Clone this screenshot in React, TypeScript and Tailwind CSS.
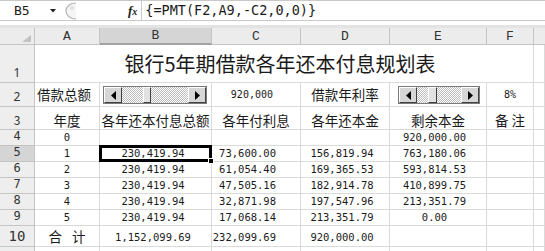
import React from 'react'

const grid = 'grid grid-cols-[35px_65px_112px_89px_89px_97px_47px_11px]'
const cell = 'flex min-w-0 border-r border-b border-[#dadada]'
const rowHead = 'flex items-end justify-center border-r border-b border-[#c4c4c4] pb-[3px] leading-none text-[12px] font-[\'Liberation_Sans\',sans-serif] text-[#333]'
const cjk = "font-['Noto_Sans_CJK_SC',sans-serif]"
const mono = "font-['DejaVu_Sans_Mono',monospace]"

const years = [
  { n: '4', a: '0', b: '', c: '', d: '', e: '920,000.00' },
  { n: '5', a: '1', b: '230,419.94', c: '73,600.00', d: '156,819.94', e: '763,180.06' },
  { n: '6', a: '2', b: '230,419.94', c: '61,054.40', d: '169,365.53', e: '593,814.53' },
  { n: '7', a: '3', b: '230,419.94', c: '47,505.16', d: '182,914.78', e: '410,899.75' },
  { n: '8', a: '4', b: '230,419.94', c: '32,871.98', d: '197,547.96', e: '213,351.79' },
  { n: '9', a: '5', b: '230,419.94', c: '17,068.14', d: '213,351.79', e: '0.00' }
]

function Arrow({ dir }: { dir: 'left' | 'right' }) {
  return (
    <div className="flex w-[18px] items-center justify-center border border-t-white border-l-white border-r-[#404040] border-b-[#404040] bg-[#d6d6d6]">
      <svg width="5" height="9" viewBox="0 0 5 9">
        {dir === 'left' ? <polygon points="5,0 5,9 0,4.5" fill="#000" /> : <polygon points="0,0 0,9 5,4.5" fill="#000" />}
      </svg>
    </div>
  )
}

function ScrollBar({ className, pre, thumb }: { className: string; pre: string; thumb: string }) {
  const checker = '[background-image:repeating-conic-gradient(#bdbdbd_0_25%,#ffffff_0_50%)] [background-size:2px_2px]'
  return (
    <div className={`flex h-[18px] border border-[#7a7a7a] bg-white ${className}`}>
      <Arrow dir="left" />
      <div className={`${pre} ${checker}`} />
      <div className={`${thumb} border border-t-white border-l-white border-r-[#404040] border-b-[#404040] bg-[#e2e2e2]`} />
      <div className={`flex-1 ${checker}`} />
      <Arrow dir="right" />
    </div>
  )
}

export default function App() {
  return (
    <div className="h-[251px] w-[545px] overflow-hidden bg-white text-[#1a1a1a]">
      {/* Formula bar */}
      <div className="flex h-[21px] items-center border-t border-b border-[#c9c9c9] bg-white">
        <div className="flex w-[61px] items-center">
          <span className={`${mono} pl-[14px] text-[13px] leading-none`}>B5</span>
          <svg className="ml-[20px]" width="6" height="4" viewBox="0 0 6 4">
            <polygon points="0,0 6,0 3,3.5" fill="#222" />
          </svg>
        </div>
        <svg className="ml-[2px]" width="14" height="18" viewBox="0 0 14 18">
          <path d="M13 1 A10 8 0 0 0 13 17" stroke="#b5b5b5" strokeWidth="1.2" fill="#f5f5f5" />
          <circle cx="9" cy="6" r="2" fill="#e0e0e0" />
        </svg>
        <span className="ml-[51px] font-['Liberation_Serif',serif] text-[13px] font-bold italic leading-none">
          f<span className="text-[10px]">x</span>
        </span>
        <div className="ml-[4px] h-full border-l border-[#c9c9c9]" />
        <span className={`${mono} pl-[3px] text-[13.5px] leading-none`}>{'{=PMT(F2,A9,-C2,0,0)}'}</span>
      </div>
      <div className="h-[7px] border-b-[3px] border-[#e3e3e3] bg-white" />

      {/* Column headers */}
      <div className={`${grid} h-[17px] font-['Liberation_Mono',monospace] text-[13px] leading-none text-[#333]`}>
        <div className="flex items-end justify-end border-r border-b border-[#c4c4c4] bg-[#ececec] pr-[3px] pb-[2px]">
          <svg width="9" height="7" viewBox="0 0 9 7">
            <polygon points="9,0 9,7 0,7" fill="#c2c2c2" />
          </svg>
        </div>
        <div className="flex items-center justify-center border-r border-b border-[#c4c4c4] bg-[#ececec]">A</div>
        <div className="flex items-center justify-center border-r border-b-2 border-r-[#c4c4c4] border-b-[#a3a3a3] bg-[#d5d5d5]">B</div>
        <div className="flex items-center justify-center border-r border-b border-[#c4c4c4] bg-[#ececec]">C</div>
        <div className="flex items-center justify-center border-r border-b border-[#c4c4c4] bg-[#ececec]">D</div>
        <div className="flex items-center justify-center border-r border-b border-[#c4c4c4] bg-[#ececec]">E</div>
        <div className="flex items-center justify-center border-r border-b border-[#c4c4c4] bg-[#ececec]">F</div>
        <div className="border-b border-[#c4c4c4] bg-[#ececec]" />
      </div>

      {/* Row 1: title */}
      <div className={`${grid} h-[38px]`}>
        <div className={`${rowHead} bg-[#eeeeee]`}>1</div>
        <div className={`${cell} col-span-6 items-center justify-center pr-[8px] ${cjk} text-[20px] leading-none`}>
          银行5年期借款各年还本付息规划表
        </div>
        <div className={cell} />
      </div>

      {/* Row 2: inputs */}
      <div className={`${grid} h-[24px]`}>
        <div className={`${rowHead} bg-[#eeeeee]`}>2</div>
        <div className={`${cell} items-center pl-[2px] ${cjk} text-[13.5px] leading-none`}>借款总额</div>
        <div className={`${cell} items-center pl-[3px] pt-[1px]`}>
          <ScrollBar className="w-[104px]" pre="w-[21px]" thumb="w-[8px]" />
        </div>
        <div className={`${cell} items-center justify-end pr-[27px] ${mono} text-[10px] leading-none`}>920,000</div>
        <div className={`${cell} items-center justify-center ${cjk} text-[13.5px] leading-none`}>借款年利率</div>
        <div className={`${cell} items-center pl-[8px] pt-[1px]`}>
          <ScrollBar className="w-[82px]" pre="w-[11px]" thumb="w-[9px]" />
        </div>
        <div className={`${cell} items-center justify-center ${mono} text-[10px] leading-none`}>8%</div>
        <div className={cell} />
      </div>

      {/* Row 3: headings */}
      <div className={`${grid} h-[23px] ${cjk} text-[13.5px] leading-none`}>
        <div className={`${rowHead} bg-[#eeeeee]`}>3</div>
        <div className={`${cell} items-end justify-center pb-[2px]`}>年度</div>
        <div className={`${cell} items-end justify-center pb-[2px] whitespace-nowrap`}>各年还本付息总额</div>
        <div className={`${cell} items-end justify-center pb-[2px]`}>各年付利息</div>
        <div className={`${cell} items-end justify-center pb-[2px]`}>各年还本金</div>
        <div className={`${cell} items-end justify-center pb-[2px]`}>剩余本金</div>
        <div className={`${cell} items-end justify-center pb-[2px] whitespace-pre`}>备 注</div>
        <div className={cell} />
      </div>

      {/* Rows 4-9 */}
      {years.map((r) => (
        <div key={r.n} className={`${grid} h-[16px] ${mono} text-[10.5px] leading-none`}>
          <div className={`${rowHead} ${r.n === '5' ? 'bg-[#d5d5d5]' : 'bg-[#eeeeee]'}`}>{r.n}</div>
          <div className={`${cell} items-center justify-center`}>{r.a}</div>
          <div className={`${cell} relative items-center justify-center pr-[5px]`}>
            {r.b}
            {r.n === '5' && (
              <>
                <div className="absolute -inset-[1px] z-10 border-[3px] border-black" />
                <div className="absolute -right-[3px] -bottom-[3px] z-20 h-[6px] w-[6px] border border-white bg-black" />
              </>
            )}
          </div>
          <div className={`${cell} items-center justify-end pr-[24px]`}>{r.c}</div>
          <div className={`${cell} items-center justify-center pr-[6px]`}>{r.d}</div>
          <div className={`${cell} items-center justify-center pr-[7px]`}>{r.e}</div>
          <div className={cell} />
          <div className={cell} />
        </div>
      ))}

      {/* Row 10: totals */}
      <div className={`${grid} h-[21px] ${mono} text-[10.5px] leading-none`}>
        <div className={`${rowHead} bg-[#eeeeee] text-[14px]`}>10</div>
        <div className={`${cell} items-end justify-center pb-[3px] ${cjk} text-[13.5px] whitespace-pre [word-spacing:7px]`}>合 计</div>
        <div className={`${cell} items-end justify-center pr-[5px] pb-[4px]`}>1,152,099.69</div>
        <div className={`${cell} items-end justify-end pr-[24px] pb-[4px]`}>232,099.69</div>
        <div className={`${cell} items-end justify-center pr-[6px] pb-[4px]`}>920,000.00</div>
        <div className={cell} />
        <div className={cell} />
        <div className={cell} />
      </div>

      {/* Row 11 (partial) */}
      <div className={`${grid} h-[16px]`}>
        <div className={`${rowHead} bg-[#eeeeee]`} />
        <div className={cell} />
        <div className={cell} />
        <div className={cell} />
        <div className={cell} />
        <div className={cell} />
        <div className={cell} />
        <div className={cell} />
      </div>
    </div>
  )
}
